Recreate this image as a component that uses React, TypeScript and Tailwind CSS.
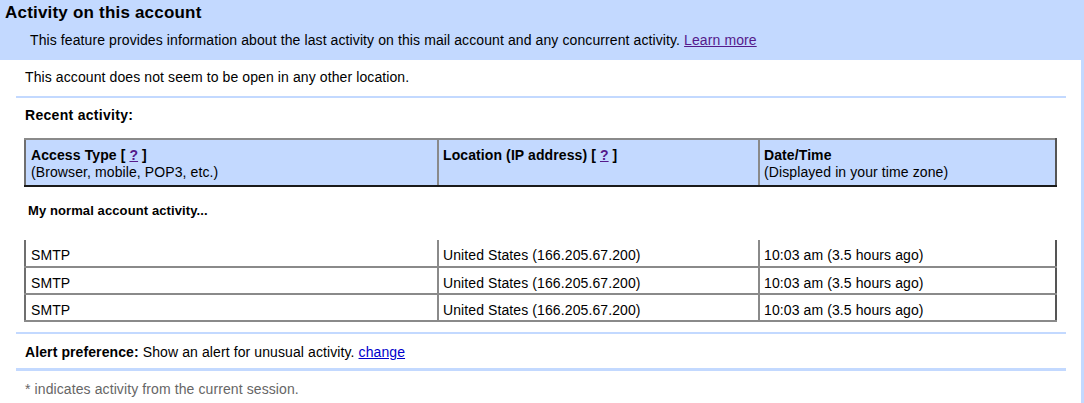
export default function App() {
  const rows = [
    { type: "SMTP", loc: "United States (166.205.67.200)", time: "10:03 am (3.5 hours ago)" },
    { type: "SMTP", loc: "United States (166.205.67.200)", time: "10:03 am (3.5 hours ago)" },
    { type: "SMTP", loc: "United States (166.205.67.200)", time: "10:03 am (3.5 hours ago)" },
  ];

  return (
    <div className="w-[1084px] h-[403px] overflow-hidden bg-[#c3d9ff] font-['Liberation_Sans',Arial,sans-serif] text-[14px] tracking-[0.1px] text-black">
      {/* header */}
      <div className="h-[60px]">
        <h1 className="pl-[5px] pt-[3px] text-[17px] leading-[20px] font-bold tracking-[0.2px]">Activity on this account</h1>
        <p className="pl-[30px] pt-[9px] leading-[16px]">
          This feature provides information about the last activity on this mail account and any concurrent activity.{" "}
          <a href="#" className="text-[#551a8b] underline">Learn more</a>
        </p>
      </div>

      {/* body */}
      <div className="mr-[3px] h-[343px] bg-white pl-4 pr-[15px]">
        <div className="px-[9px] pt-[9px] h-[36px] leading-[16px]">
          This account does not seem to be open in any other location.
        </div>
        <div className="h-[2px] bg-[#c3d9ff]" />

        <div className="px-[9px] pt-[9px] h-[40px] font-bold leading-[16px] tracking-[0.3px]">Recent activity:</div>

        <table className="ml-2 w-[1033px] border-collapse">
          <thead>
            <tr className="bg-[#c3d9ff] h-[47px] align-top">
              <th className="w-[413px] border-t-2 border-l-2 border-b-2 border-t-[#8a8a8a] border-l-[#6f6f6f] border-b-[#1a1a1a] px-[5px] pt-[7px] text-left font-normal leading-[17px]">
                <div className="font-bold">
                  Access Type [ <a href="#" className="text-[#551a8b] underline">?</a> ]
                </div>
                <div>(Browser, mobile, POP3, etc.)</div>
              </th>
              <th className="w-[321px] border-t-2 border-l-2 border-b-2 border-t-[#8a8a8a] border-l-[#8a8a8a] border-b-[#1a1a1a] px-[4px] pt-[7px] text-left font-normal leading-[17px]">
                <div className="font-bold">
                  Location (IP address) [ <a href="#" className="text-[#551a8b] underline">?</a> ]
                </div>
              </th>
              <th className="border-2 border-t-[#8a8a8a] border-l-[#8a8a8a] border-r-[#555] border-b-[#1a1a1a] px-[4px] pt-[7px] text-left font-normal leading-[17px]">
                <div className="font-bold">Date/Time</div>
                <div>(Displayed in your time zone)</div>
              </th>
            </tr>
          </thead>
          <tbody>
            <tr className="h-[54px]">
              <td colSpan={3} className="pl-[3px] pb-[6px] align-middle text-[13px] font-bold">
                My normal account activity...
              </td>
            </tr>
            {rows.map((r, i) => (
              <tr key={i} className="h-[27px]">
                <td className="border-2 border-t-0 border-[#8a8a8a] border-l-[#6f6f6f] px-[5px] pt-[4px] pb-0 leading-[16px]">{r.type}</td>
                <td className="border-2 border-t-0 border-[#8a8a8a] px-[4px] pt-[4px] pb-0 leading-[16px]">{r.loc}</td>
                <td className="border-2 border-t-0 border-[#8a8a8a] border-r-[#555] px-[4px] pt-[4px] pb-0 leading-[16px]">{r.time}</td>
              </tr>
            ))}
          </tbody>
        </table>

        <div className="mt-[10px] h-[2px] bg-[#c3d9ff]" />
        <div className="px-[9px] pt-[10px] h-[34px] leading-[16px]">
          <span className="font-bold">Alert preference:</span> Show an alert for unusual activity.{" "}
          <a href="#" className="text-[#0000cc] underline">change</a>
        </div>
        <div className="h-[3px] bg-[#c3d9ff]" />
        <div className="px-[9px] pt-[10px] leading-[16px] text-[#666]">
          * indicates activity from the current session.
        </div>
      </div>
    </div>
  );
}
